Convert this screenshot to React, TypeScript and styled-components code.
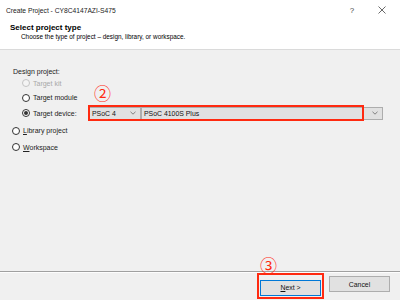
import React from "react";
import styled, { createGlobalStyle } from "styled-components";

const Global = createGlobalStyle`
  html, body { margin: 0; padding: 0; background: #f0f0f0; }
  body { font-family: "Liberation Sans", Arial, sans-serif; color: #000; }
  * { box-sizing: border-box; }
`;

const Window = styled.div`
  width: 400px;
  height: 300px;
  display: flex;
  flex-direction: column;
  background: #f0f0f0;
  position: relative;
  overflow: hidden;
`;

const TitleBar = styled.div`
  height: 20px;
  background: #fff;
  display: flex;
  align-items: center;
  padding: 0 3px 0 6px;
  font-size: 6.7px;
  color: #222;
`;

const TitleText = styled.div`
  flex: 1;
`;

const TitleButton = styled.div<{ $w: number }>`
  width: ${(p) => p.$w}px;
  height: 20px;
  display: flex;
  align-items: center;
  justify-content: center;
  color: #444;
  font-size: 8px;
`;

const Header = styled.div`
  height: 30px;
  background: #fff;
  border-bottom: 1px solid #dadada;
  padding: 3px 0 0 10px;
`;

const HeaderTitle = styled.div`
  font-weight: bold;
  font-size: 8px;
  line-height: 9px;
`;

const HeaderSub = styled.div`
  font-size: 6.4px;
  line-height: 10px;
  padding-left: 11px;
`;

const Body = styled.div`
  flex: 1;
  padding: 17px 0 0 12px;
  display: flex;
  flex-direction: column;
  font-size: 7px;
`;

const GroupLabel = styled.div`
  padding-left: 1px;
  line-height: 9px;
  height: 9px;
  color: #222;
`;

const Row = styled.div<{ $indent?: boolean; $h: number }>`
  display: flex;
  align-items: center;
  height: ${(p) => p.$h}px;
  padding-left: ${(p) => (p.$indent ? 10 : 0)}px;
`;

const RadioLabel = styled.label<{ $width?: number; $disabled?: boolean }>`
  display: flex;
  align-items: center;
  gap: 3px;
  width: ${(p) => (p.$width ? `${p.$width}px` : "auto")};
  color: ${(p) => (p.$disabled ? "#a8a8a8" : "#222")};
`;

const RadioCircle = styled.span<{ $checked?: boolean; $disabled?: boolean }>`
  width: 8px;
  height: 8px;
  border-radius: 50%;
  border: 1px solid ${(p) => (p.$disabled ? "#c4c4c4" : "#333")};
  background: ${(p) => (p.$disabled ? "#f4f4f4" : "#fff")};
  display: flex;
  align-items: center;
  justify-content: center;
  &::after {
    content: "";
    width: 4px;
    height: 4px;
    border-radius: 50%;
    background: ${(p) => (p.$checked ? "#333" : "transparent")};
  }
`;

const U = styled.span`
  text-decoration: underline;
`;

const ComboArea = styled.div`
  position: relative;
  display: flex;
  align-items: center;
  height: 13px;
`;

const Combo = styled.div<{ $w: number }>`
  width: ${(p) => p.$w}px;
  height: 13px;
  background: #e1e1e1;
  border: 1px solid #adadad;
  display: flex;
  align-items: center;
  padding: 0 4px 0 2px;
  font-size: 6.9px;
  color: #111;
`;

const ComboText = styled.span`
  flex: 1;
`;

const Highlight = styled.div`
  position: absolute;
  left: -1px;
  top: -2px;
  width: 276px;
  height: 16px;
  border: 2px solid #ff2a10;
  pointer-events: none;
`;

const Marker = styled.div<{ $left: number; $top: number }>`
  position: absolute;
  left: ${(p) => p.$left}px;
  top: ${(p) => p.$top}px;
  color: #ff2a10;
  font-size: 17px;
  line-height: 17px;
  font-family: "Noto Sans CJK JP", "DejaVu Sans", sans-serif;
  white-space: nowrap;
`;

const Footer = styled.div`
  height: 29px;
  border-top: 1px solid #a0a0a0;
  box-shadow: inset 0 1px 0 #fdfdfd;
  display: flex;
  justify-content: flex-end;
  align-items: flex-start;
  padding: 1px 10px 0 0;
  gap: 5px;
`;

const Frame = styled.div`
  position: relative;
  border: 2px solid #ff2a10;
  padding: 1px;
`;

const Button = styled.button<{ $default?: boolean }>`
  width: 61px;
  height: 16px;
  margin: 0;
  padding: 0;
  background: #e1e1e1;
  border: 1px solid ${(p) => (p.$default ? "#0078d7" : "#adadad")};
  font-family: "Liberation Sans", Arial, sans-serif;
  font-size: 6.9px;
  color: #111;
`;

const PlainButton = styled(Button)`
  margin-top: 3px;
`;

const Chevron = () => (
  <svg width="6" height="4" viewBox="0 0 6 4">
    <path d="M0.5 0.8 L3 3.2 L5.5 0.8" fill="none" stroke="#666" strokeWidth="0.8" />
  </svg>
);

export default function App() {
  return (
    <>
      <Global />
      <Window>
        <TitleBar>
          <TitleText>Create Project - CY8C4147AZI-S475</TitleText>
          <TitleButton $w={30}>?</TitleButton>
          <TitleButton $w={30}>
            <svg width="8" height="8" viewBox="0 0 8 8">
              <path d="M0.5 0.5 L7.5 7.5 M7.5 0.5 L0.5 7.5" stroke="#444" strokeWidth="0.8" />
            </svg>
          </TitleButton>
        </TitleBar>
        <Header>
          <HeaderTitle>Select project type</HeaderTitle>
          <HeaderSub>Choose the type of project – design, library, or workspace.</HeaderSub>
        </Header>
        <Body>
          <GroupLabel>Design project:</GroupLabel>
          <Row $indent $h={14}>
            <RadioLabel $disabled>
              <RadioCircle $disabled />
              Target kit
            </RadioLabel>
          </Row>
          <Row $indent $h={15}>
            <RadioLabel>
              <RadioCircle />
              Target module
            </RadioLabel>
          </Row>
          <Row $indent $h={16}>
            <RadioLabel $width={67}>
              <RadioCircle $checked />
              Target device:
            </RadioLabel>
            <ComboArea>
              <Combo $w={52}>
                <ComboText>PSoC 4</ComboText>
                <Chevron />
              </Combo>
              <Combo $w={242}>
                <ComboText>PSoC 4100S Plus</ComboText>
                <Chevron />
              </Combo>
              <Highlight />
              <Marker $left={5} $top={-23}>②</Marker>
            </ComboArea>
          </Row>
          <Row $h={19}>
            <RadioLabel>
              <RadioCircle />
              <span>
                <U>L</U>ibrary project
              </span>
            </RadioLabel>
          </Row>
          <Row $h={14}>
            <RadioLabel>
              <RadioCircle />
              <span>
                <U>W</U>orkspace
              </span>
            </RadioLabel>
          </Row>
        </Body>
        <Footer>
          <Frame>
            <Button $default>
              <U>N</U>ext &gt;
            </Button>
            <Marker $left={1} $top={-19}>③</Marker>
          </Frame>
          <PlainButton>Cancel</PlainButton>
        </Footer>
      </Window>
    </>
  );
}
